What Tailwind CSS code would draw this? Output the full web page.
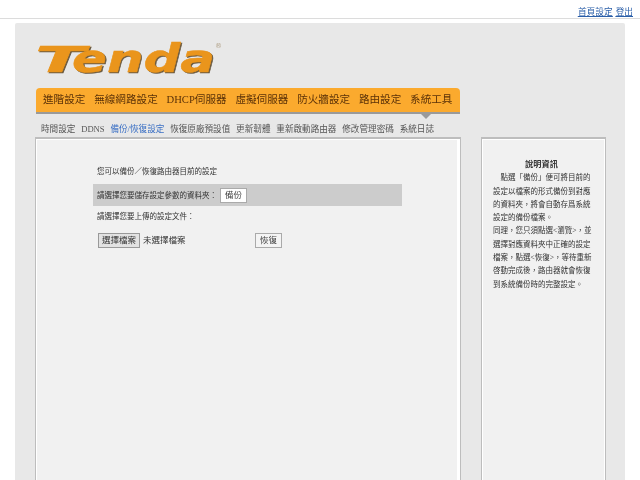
<!DOCTYPE html>
<html lang="zh-Hant">
<head>
<meta charset="utf-8">
<script src="https://cdn.jsdelivr.net/npm/@tailwindcss/browser@4"></script>
</head>
<body class="h-[480px] w-[640px] overflow-hidden bg-white font-['Liberation_Serif','Noto_Sans_CJK_TC',serif] text-[7.5px] leading-[13.3px] text-[#333]">
<div class="blur-[0.3px]">
  <header class="flex h-[19px] justify-end gap-[3px] border-b border-[#dcdcdc] pr-[7px] pt-[6px] text-[8.7px] leading-[12px] text-[#2a5ea8] underline">
    <a>首頁設定</a><a>登出</a>
  </header>
  <main class="ml-[15px] mt-[4px] h-[457px] w-[610px] rounded-t-[2px] bg-[#e8e8e8] pl-[21px]">
    <div class="h-[65px] pt-[11px]">
      <svg width="190" height="44" viewBox="0 0 190 44" class="block overflow-visible">
        <g font-family="'DejaVu Sans',sans-serif" font-weight="700" font-style="italic">
          <g fill="#6b5a40" stroke="#6b5a40" stroke-width="0.5" transform="translate(1.2 1.4)">
            <text x="-1" y="37.5" font-size="35" textLength="50" lengthAdjust="spacingAndGlyphs">T</text>
            <text x="36" y="37.5" font-size="39" textLength="143" lengthAdjust="spacingAndGlyphs">enda</text>
          </g>
          <g fill="#ea951c" stroke="#ea951c" stroke-width="0.5">
            <text x="-1" y="37.5" font-size="35" textLength="50" lengthAdjust="spacingAndGlyphs">T</text>
            <text x="36" y="37.5" font-size="39" textLength="143" lengthAdjust="spacingAndGlyphs">enda</text>
          </g>
        </g>
        <text x="179" y="14" font-size="7" fill="#b3a48c" font-family="'DejaVu Sans',sans-serif">®</text>
      </svg>
    </div>
    <nav class="relative flex h-[26px] w-[424px] items-center gap-[8.8px] rounded-t-[4px] border-b-[2px] border-[#9a9a9a] bg-[#fbaa2e] pl-[7px] text-[10.6px] leading-[14px] text-[#5b3208]">
      <a>進階設定</a><a>無線網路設定</a><a>DHCP伺服器</a><a>虛擬伺服器</a><a>防火牆設定</a><a>路由設定</a><a>系統工具</a>
      <span class="absolute left-[385px] top-[26px] size-0 border-x-[5px] border-t-[5px] border-x-transparent border-t-[#9a9a9a]"></span>
    </nav>
    <div class="flex h-[23px] items-center gap-[5.8px] pl-[5px] pt-[6px] text-[8.6px] leading-[12px] text-[#555]">
      <a>時間設定</a><a>DDNS</a><a class="text-[#3a6fc4]">備份/恢復設定</a><a>恢復原廠預設值</a><a>更新韌體</a><a>重新啟動路由器</a><a>修改管理密碼</a><a>系統日誌</a>
    </div>
    <div class="flex h-[343px] gap-[20px]">
      <section class="-ml-px w-[426px] border-x border-t-2 border-[#bdbdbd] bg-[#f1f1f1] pl-[57px] shadow-[inset_1px_1px_0_#fff,inset_-3px_0_0_#fff]">
        <p class="pl-[4px] pt-[26px]">您可以備份／恢復路由器目前的設定</p>
        <div class="mt-[6px] flex h-[22px] w-[309px] items-center bg-[#cccccc] pl-[4px]">
          <span>請選擇您要儲存設定參數的資料夾：</span>
          <button class="ml-[3px] h-[15px] w-[27px] border border-[#aaa] bg-white text-[8.5px] leading-[12px] text-[#444]">備份</button>
        </div>
        <p class="pl-[4px] pt-[4px]">請選擇您要上傳的設定文件：</p>
        <div class="mt-[9px] flex items-center pl-[5px]">
          <button class="h-[15px] w-[42px] border border-[#999] bg-[#e2e2e2] text-[8.5px] leading-[12px] text-[#333]">選擇檔案</button>
          <span class="ml-[3px] w-[112px] text-[8.5px] leading-[12px]">未選擇檔案</span>
          <button class="h-[15px] w-[27px] border border-[#aaa] bg-[#f4f4f4] text-[8.5px] leading-[12px] text-[#444]">恢復</button>
        </div>
      </section>
      <aside class="w-[125px] border-x border-t-2 border-[#bdbdbd] bg-[#f1f1f1] px-[11px] pt-[19px] shadow-[inset_1px_1px_0_#fff,inset_-1px_0_0_#fff]">
        <h2 class="pr-[4px] text-center text-[8.2px] font-bold">說明資訊</h2>
        <p class="whitespace-nowrap">　點選「備份」便可將目前的<br>設定以檔案的形式備份到對應<br>的資料夾，將會自動存爲系統<br>設定的備份檔案。<br>同理，您只須點選&lt;瀏覽&gt;，並<br>選擇對應資料夾中正確的設定<br>檔案，點選&lt;恢復&gt;，等待重新<br>啓動完成後，路由器就會恢復<br>到系統備份時的完整設定。</p>
      </aside>
    </div>
  </main>
</div>
</body>
</html>
